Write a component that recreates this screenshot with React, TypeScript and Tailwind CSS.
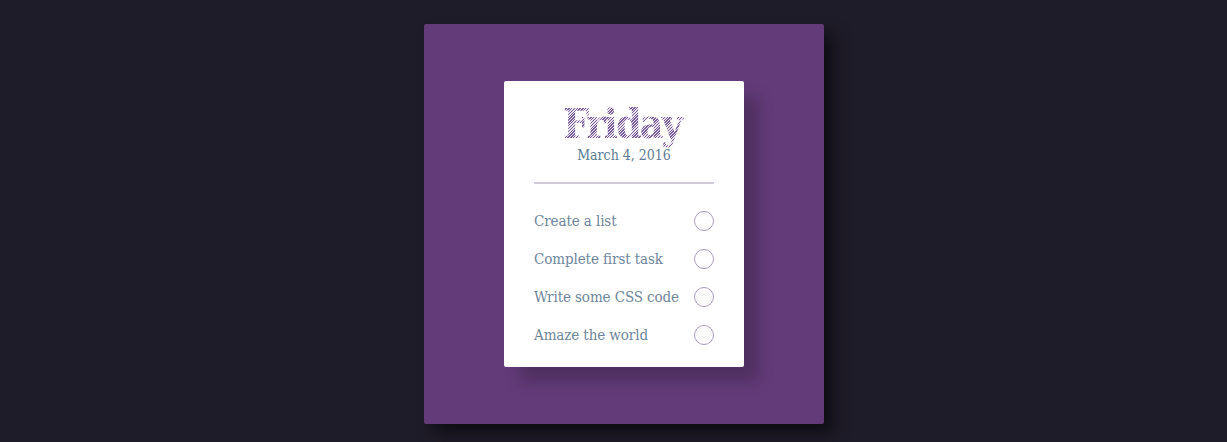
const tasks = ['Create a list', 'Complete first task', 'Write some CSS code', 'Amaze the world'];

export default function App() {
  return (
    <div className="h-[442px] overflow-hidden bg-[#1f1c29] flex justify-center pl-[21px] pt-6 font-['DejaVu_Serif',serif]">
      <div className="w-[400px] h-[400px] rounded-[2px] bg-[#633b79] shadow-[10px_10px_15px_rgba(0,0,0,0.55)] flex items-center justify-center">
        <div className="w-[240px] h-[286.5px] rounded-[2px] bg-white px-[30px] pt-[22px] shadow-[15px_15px_15px_rgba(0,0,0,0.2)]">
          <div className="text-center border-b-2 border-[#d2cbdc] h-[81px]">
            <h1 className="h-[46px] -mb-1 pr-1 text-[41px] leading-[43px] font-bold font-stretch-condensed tracking-[-2px] text-transparent bg-clip-text bg-[repeating-linear-gradient(135deg,#7a6199_0px,#7a6199_1px,#e6e0ee_1px,#e6e0ee_2px)]">
              Friday
            </h1>
            <p className="text-[14px] leading-5 font-stretch-condensed text-[#5d7b94]">March 4, 2016</p>
          </div>
          <ul className="pt-[18px]">
            {tasks.map((t) => (
              <li key={t} className="h-[38px] flex items-center justify-between text-[#6f869c] text-[15px] font-stretch-condensed tracking-[-0.1px]">
                <span>{t}</span>
                <span className="w-5 h-5 rounded-full border border-[#ab9dbf]" />
              </li>
            ))}
          </ul>
        </div>
      </div>
    </div>
  );
}
